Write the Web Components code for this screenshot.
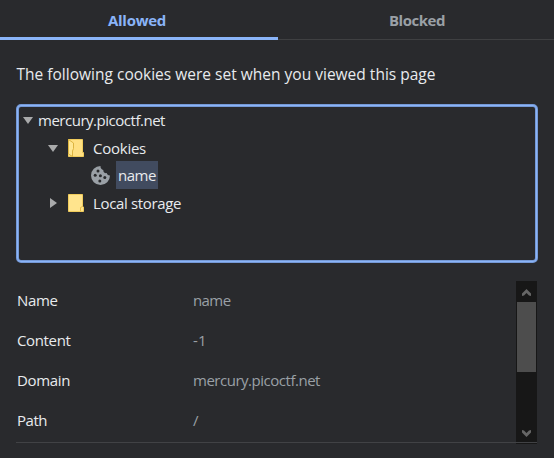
<!DOCTYPE html>
<html lang="en"><head><meta charset="utf-8"><title>Cookies in use</title>
<style>
html,body{margin:0;background:#292a2d}
body{font:15px/20px "Open Sans","Noto Sans",sans-serif;color:#e8eaed;width:554px;height:458px;overflow:hidden}
</style></head><body>
<cookie-dialog></cookie-dialog>
<script>
class Base extends HTMLElement{
  constructor(){super();this.attachShadow({mode:'open'}).innerHTML=this.template()}
}
/* A single-line label whose tracking is adjusted to fill the given advance width. */
customElements.define('fit-text',class extends Base{
  template(){return `<style>:host{display:inline-block;white-space:nowrap}span{display:inline-block}</style><span><slot></slot></span>`}
  connectedCallback(){
    const s=this.shadowRoot.querySelector('span'),w=+this.getAttribute('w'),n=this.textContent.length;
    if(w&&n>1)s.style.letterSpacing=(w-s.getBoundingClientRect().width)/n+'px';
  }
});
customElements.define('tab-item',class extends Base{
  template(){return `<style>:host{box-sizing:border-box;height:40px;padding:10px 0 0 2px;text-align:center;font-weight:700;color:#9aa0a6;border-bottom:1px solid #3f4042}
  :host([active]){padding:10px 4px 0 0;color:#8ab4f8;border-bottom:3px solid #8ab4f8}</style><slot></slot>`}
});
customElements.define('tab-strip',class extends Base{
  template(){return `<style>:host{display:grid;grid-template-columns:278px 276px}</style><slot></slot>`}
});
customElements.define('tree-icon',class extends Base{
  template(){return `<style>:host{display:block;flex:none;line-height:0}svg{display:block}</style>`}
  connectedCallback(){
    const icons={
      down:`<svg width="10" height="7"><path d="M0 0H10L5 7Z" fill="#a9aaab"/></svg>`,
      right:`<svg width="7" height="10"><path d="M0 0L7 5L0 10Z" fill="#a9aaab"/></svg>`,
      open:`<svg width="16" height="18"><path d="M.5.5H14.5V13.5H15.5V17.5H.5Z" fill="#ffe082" stroke="#f0cc5c"/><path d="M.5.5L5.5 4V9.5L4.5 12V17.5L.5 15Z" fill="#ffe793" stroke="#dcb440"/></svg>`,
      closed:`<svg width="16" height="18"><path d="M.5.5H14.5V12.5L15.5 13V17.5H.5Z" fill="#ffe48d" stroke="#f0cc5c"/><path d="M12.5 17V13.5L14.5 12.5" fill="none" stroke="#e6bd45"/></svg>`,
      cookie:`<svg width="19" height="19" viewBox="0 0 19 19"><path d="M9.5 0A9.5 9.5 0 1 0 19 9.5C17.2 9.6 16 8.6 15.8 7.1C13.7 7.4 12 6.1 12.3 3.9C10.5 3.6 9.3 2 9.5 0Z" fill="#9aa0a6"/><g fill="#292a2d"><circle cx="7" cy="4.9" r="1.5"/><circle cx="4.2" cy="9.3" r="1.5"/><circle cx="9.4" cy="9.8" r="1.5"/><circle cx="13.8" cy="11.6" r="1.5"/><circle cx="8.8" cy="15" r="1.5"/></g></svg>`};
    this.shadowRoot.innerHTML+=icons[this.getAttribute('name')];
  }
});
customElements.define('tree-row',class extends Base{
  template(){return `<style>:host{display:flex;align-items:center;height:27.5px}</style><slot></slot>`}
});
customElements.define('cookie-tree',class extends Base{
  template(){return `<style>
  :host{display:block;box-sizing:border-box;width:522px;height:159px;margin:19px 0 0 16px;padding:0 4px;border:3px solid #7599d6;outline:1px solid #8ab4f8;outline-offset:-2px;border-radius:5px}
  .l1{padding-left:25px}.l2{padding-left:68px}.l1b{padding-left:27px}
  .root fit-text{padding-bottom:2px}
  .sel{background:#414b5f;height:28px;width:42px;box-sizing:border-box;padding:4px 0 0 2px;margin:-1px 0 1px 6px}
  </style>
  <tree-row class="root"><tree-icon name="down"></tree-icon><fit-text w="127" style="margin-left:5px">mercury.picoctf.net</fit-text></tree-row>
  <tree-row class="l1"><tree-icon name="down"></tree-icon><tree-icon name="open" style="margin-left:10px"></tree-icon><fit-text w="53" style="margin-left:9px">Cookies</fit-text></tree-row>
  <tree-row class="l2"><tree-icon name="cookie"></tree-icon><div class="sel"><fit-text w="38">name</fit-text></div></tree-row>
  <tree-row class="l1b"><tree-icon name="right"></tree-icon><tree-icon name="closed" style="margin-left:11px"></tree-icon><fit-text w="88" style="margin-left:9px">Local storage</fit-text></tree-row>`}
});
customElements.define('detail-row',class extends Base{
  template(){return `<style>:host{display:grid;grid-template-columns:176px 1fr;height:40px;align-items:center;padding-left:1px}.v{color:#9aa0a6}</style><slot name="k"></slot><div class="v"><slot></slot></div>`}
});
customElements.define('scroll-bar',class extends Base{
  template(){return `<style>:host{display:flex;flex-direction:column;align-items:center;width:21px;height:163px;background:#171717}
  .t{width:19px;height:70px;background:#4d4d4d}svg{display:block}.u{height:21px}.d{margin-top:auto;height:22px}</style>
  <svg class="u" width="21"><path d="M6 12.5L10.5 8L15 12.5V15L13 14.5L10.5 12L8 14.5L6 15Z" fill="#666"/></svg><div class="t"></div>
  <svg class="d" width="21"><path d="M6 8L8 8.5L10.5 11L13 8.5L15 8V10.5L10.5 15L6 10.5Z" fill="#666"/></svg>`}
});
customElements.define('cookie-details',class extends Base{
  template(){return `<style>:host{display:grid;grid-template-columns:500px 21px;margin:18px 0 0 16px;width:521px;height:163px}
  .rows{margin-top:-1px;height:162px;border-bottom:1px solid #414245;width:521px;box-sizing:content-box}scroll-bar{grid-area:1/2}.rows{grid-area:1/1;z-index:1}</style>
  <scroll-bar></scroll-bar><div class="rows">
  <detail-row><fit-text slot="k" w="40.5">Name</fit-text><fit-text w="37.5">name</fit-text></detail-row>
  <detail-row><fit-text slot="k" w="53.5">Content</fit-text><fit-text w="14">-1</fit-text></detail-row>
  <detail-row><fit-text slot="k" w="53">Domain</fit-text><fit-text w="127">mercury.picoctf.net</fit-text></detail-row>
  <detail-row><fit-text slot="k" w="30">Path</fit-text><fit-text>/</fit-text></detail-row></div>`}
});
customElements.define('cookie-dialog',class extends Base{
  template(){return `<style>:host{display:flow-root;height:458px}.h{margin:23px 0 0 16.5px;height:22px;line-height:22px;font-size:15.5px}</style>
  <tab-strip><tab-item active><fit-text w="58">Allowed</fit-text></tab-item><tab-item><fit-text w="56">Blocked</fit-text></tab-item></tab-strip>
  <div class="h"><fit-text w="419">The following cookies were set when you viewed this page</fit-text></div>
  <cookie-tree></cookie-tree><cookie-details></cookie-details>`}
});
</script></body></html>
